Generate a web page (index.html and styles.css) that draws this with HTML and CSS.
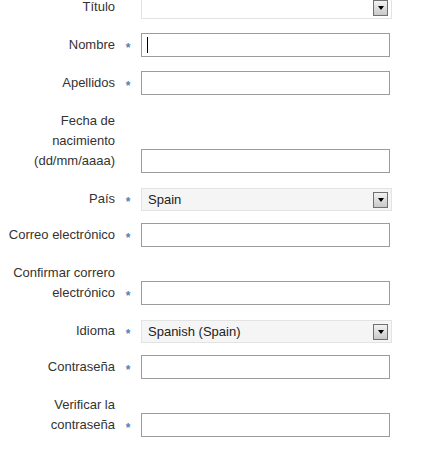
FILE: index.html
```html
<!DOCTYPE html>
<html lang="es">
<head>
<meta charset="utf-8">
<title>Registro</title>
<link rel="stylesheet" href="styles.css">
</head>
<body>
<form class="form">
  <div class="row row-select">
    <label class="label">Título</label>
    <span class="star"></span>
    <div class="select select-blank"><span class="select-text"></span><span class="arrow"></span></div>
  </div>
  <div class="row">
    <label class="label">Nombre</label>
    <span class="star">*</span>
    <span class="field-wrap"><input class="field" type="text"><span class="caret"></span></span>
  </div>
  <div class="row">
    <label class="label">Apellidos</label>
    <span class="star">*</span>
    <input class="field" type="text">
  </div>
  <div class="row">
    <label class="label">Fecha de nacimiento (dd/mm/aaaa)</label>
    <span class="star"></span>
    <input class="field" type="text">
  </div>
  <div class="row row-select">
    <label class="label">País</label>
    <span class="star">*</span>
    <div class="select"><span class="select-text">Spain</span><span class="arrow"></span></div>
  </div>
  <div class="row">
    <label class="label">Correo electrónico</label>
    <span class="star">*</span>
    <input class="field" type="text">
  </div>
  <div class="row">
    <label class="label">Confirmar correro electrónico</label>
    <span class="star">*</span>
    <input class="field" type="text">
  </div>
  <div class="row row-select">
    <label class="label">Idioma</label>
    <span class="star">*</span>
    <div class="select"><span class="select-text">Spanish (Spain)</span><span class="arrow"></span></div>
  </div>
  <div class="row">
    <label class="label">Contraseña</label>
    <span class="star">*</span>
    <input class="field" type="password">
  </div>
  <div class="row">
    <label class="label">Verificar la contraseña</label>
    <span class="star">*</span>
    <input class="field" type="password">
  </div>
</form>
</body>
</html>
```

FILE: styles.css
```css
html, body {
  margin: 0;
  padding: 0;
  background: #ffffff;
}

body {
  font-family: "Liberation Sans", Arial, sans-serif;
  font-size: 13px;
  color: #333333;
}

.form {
  margin-top: -5px;
}

.row {
  display: flex;
  align-items: flex-end;
  margin-bottom: 14px;
}

.row-select {
  margin-bottom: 12px;
}

.row:first-child {
  margin-bottom: 14px;
}

.label {
  width: 115px;
  flex: none;
  text-align: right;
  line-height: 20px;
  padding: 2px 0;
}

.star {
  width: 26px;
  height: 24px;
  flex: none;
  display: flex;
  justify-content: center;
  align-items: center;
  color: #5a7db3;
  font-size: 12px;
  line-height: 1;
  padding-top: 5px;
  box-sizing: border-box;
  font-weight: bold;
}

.field-wrap {
  position: relative;
  display: block;
  flex: none;
}

.field {
  display: block;
  flex: none;
  width: 249px;
  height: 24px;
  box-sizing: border-box;
  margin: 0;
  padding: 2px 5px;
  border: 1px solid #9c9c9c;
  background: #ffffff;
  font-family: "Liberation Sans", Arial, sans-serif;
  font-size: 13px;
  outline: none;
}

.caret {
  position: absolute;
  left: 6px;
  top: 4px;
  width: 1px;
  height: 16px;
  background: #000000;
}

.select {
  flex: none;
  width: 251px;
  height: 23px;
  box-sizing: border-box;
  border: 1px solid #e3e3e3;
  background: #f5f5f5;
  display: flex;
  align-items: center;
  padding: 0 3px 0 6px;
}

.select-blank {
  background: #ffffff;
}

.select-text {
  flex: 1;
  color: #222222;
  line-height: 20px;
}

.arrow {
  flex: none;
  width: 15px;
  height: 16px;
  box-sizing: border-box;
  border: 1px solid #707070;
  background: linear-gradient(#f2f2f2, #c9c9c9);
  display: flex;
  align-items: center;
  justify-content: center;
}

.arrow::after {
  content: "";
  display: block;
  width: 0;
  height: 0;
  border-left: 3.5px solid transparent;
  border-right: 3.5px solid transparent;
  border-top: 4px solid #000000;
  margin-top: 1px;
}
```
